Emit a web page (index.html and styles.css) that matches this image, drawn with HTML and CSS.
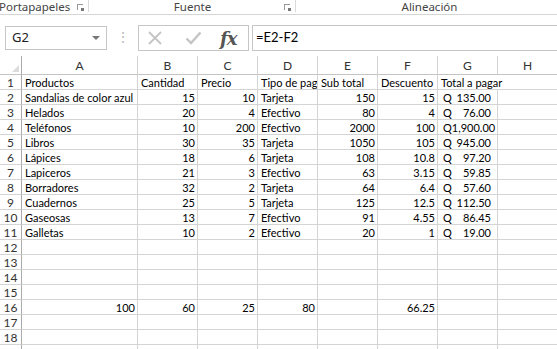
FILE: index.html
```html
<!DOCTYPE html>
<html lang="es">
<head>
  <meta charset="UTF-8" />
  <title>Libro1 - Excel</title>
  <link rel="stylesheet" href="styles.css">
</head>
<body>
  <div class="ribbon">
    <div class="group group-clip">Portapapeles <span class="launcher"></span></div>
    <div class="group group-font">Fuente <span class="launcher"></span></div>
    <div class="group group-align">Alineación</div>
  </div>

  <div class="formula-row">
    <div class="name-box">
      G2
      <span class="arrow"></span>
    </div>
    <div class="dots">⋮</div>
    <div class="fx-box">
      <svg width="14" height="14" viewBox="0 0 14 14"><path d="M1 1 L13 13 M13 1 L1 13" stroke="#c4c4c4" stroke-width="1.8" fill="none"/></svg>
      <svg width="17" height="14" viewBox="0 0 17 14"><path d="M1.5 7.5 L6 12 L15.5 1.5" stroke="#c4c4c4" stroke-width="2.4" fill="none"/></svg>
      <span class="fx">fx</span>
    </div>
    <div class="formula">=E2-F2</div>
  </div>

  <div class="sheet">
    <div class="hd corner"><span class="tri"></span></div>
    <div class="hd">A</div>
    <div class="hd">B</div>
    <div class="hd">C</div>
    <div class="hd">D</div>
    <div class="hd">E</div>
    <div class="hd">F</div>
    <div class="hd">G</div>
    <div class="hd">H</div>

    <div class="rh">1</div>
    <div class="c">Productos</div>
    <div class="c">Cantidad</div>
    <div class="c">Precio</div>
    <div class="c">Tipo de pago</div>
    <div class="c">Sub total</div>
    <div class="c">Descuento</div>
    <div class="c wide">Total a pagar</div>

    <div class="rh">2</div>
    <div class="c">Sandalias de color azul</div>
    <div class="c n">15</div><div class="c n">10</div><div class="c">Tarjeta</div>
    <div class="c n">150</div><div class="c n">15</div>
    <div class="c acc"><span>Q</span><span>135.00</span></div><div class="c"></div>

    <div class="rh">3</div>
    <div class="c">Helados</div>
    <div class="c n">20</div><div class="c n">4</div><div class="c">Efectivo</div>
    <div class="c n">80</div><div class="c n">4</div>
    <div class="c acc"><span>Q</span><span>76.00</span></div><div class="c"></div>

    <div class="rh">4</div>
    <div class="c">Teléfonos</div>
    <div class="c n">10</div><div class="c n">200</div><div class="c">Efectivo</div>
    <div class="c n">2000</div><div class="c n">100</div>
    <div class="c acc"><span>Q</span><span>1,900.00</span></div><div class="c"></div>

    <div class="rh">5</div>
    <div class="c">Libros</div>
    <div class="c n">30</div><div class="c n">35</div><div class="c">Tarjeta</div>
    <div class="c n">1050</div><div class="c n">105</div>
    <div class="c acc"><span>Q</span><span>945.00</span></div><div class="c"></div>

    <div class="rh">6</div>
    <div class="c">Lápices</div>
    <div class="c n">18</div><div class="c n">6</div><div class="c">Tarjeta</div>
    <div class="c n">108</div><div class="c n">10.8</div>
    <div class="c acc"><span>Q</span><span>97.20</span></div><div class="c"></div>

    <div class="rh">7</div>
    <div class="c">Lapiceros</div>
    <div class="c n">21</div><div class="c n">3</div><div class="c">Efectivo</div>
    <div class="c n">63</div><div class="c n">3.15</div>
    <div class="c acc"><span>Q</span><span>59.85</span></div><div class="c"></div>

    <div class="rh">8</div>
    <div class="c">Borradores</div>
    <div class="c n">32</div><div class="c n">2</div><div class="c">Tarjeta</div>
    <div class="c n">64</div><div class="c n">6.4</div>
    <div class="c acc"><span>Q</span><span>57.60</span></div><div class="c"></div>

    <div class="rh">9</div>
    <div class="c">Cuadernos</div>
    <div class="c n">25</div><div class="c n">5</div><div class="c">Tarjeta</div>
    <div class="c n">125</div><div class="c n">12.5</div>
    <div class="c acc"><span>Q</span><span>112.50</span></div><div class="c"></div>

    <div class="rh">10</div>
    <div class="c">Gaseosas</div>
    <div class="c n">13</div><div class="c n">7</div><div class="c">Efectivo</div>
    <div class="c n">91</div><div class="c n">4.55</div>
    <div class="c acc"><span>Q</span><span>86.45</span></div><div class="c"></div>

    <div class="rh">11</div>
    <div class="c">Galletas</div>
    <div class="c n">10</div><div class="c n">2</div><div class="c">Efectivo</div>
    <div class="c n">20</div><div class="c n">1</div>
    <div class="c acc"><span>Q</span><span>19.00</span></div><div class="c"></div>

    <div class="rh">12</div>
    <div class="c"></div><div class="c"></div><div class="c"></div><div class="c"></div>
    <div class="c"></div><div class="c"></div><div class="c"></div><div class="c"></div>

    <div class="rh">13</div>
    <div class="c"></div><div class="c"></div><div class="c"></div><div class="c"></div>
    <div class="c"></div><div class="c"></div><div class="c"></div><div class="c"></div>

    <div class="rh">14</div>
    <div class="c"></div><div class="c"></div><div class="c"></div><div class="c"></div>
    <div class="c"></div><div class="c"></div><div class="c"></div><div class="c"></div>

    <div class="rh">15</div>
    <div class="c"></div><div class="c"></div><div class="c"></div><div class="c"></div>
    <div class="c"></div><div class="c"></div><div class="c"></div><div class="c"></div>

    <div class="rh">16</div>
    <div class="c n">100</div><div class="c n">60</div><div class="c n">25</div><div class="c n">80</div>
    <div class="c"></div><div class="c n">66.25</div><div class="c"></div><div class="c"></div>

    <div class="rh">17</div>
    <div class="c"></div><div class="c"></div><div class="c"></div><div class="c"></div>
    <div class="c"></div><div class="c"></div><div class="c"></div><div class="c"></div>

    <div class="rh">18</div>
    <div class="c"></div><div class="c"></div><div class="c"></div><div class="c"></div>
    <div class="c"></div><div class="c"></div><div class="c"></div><div class="c"></div>

    <div class="rh"></div>
    <div class="c"></div><div class="c"></div><div class="c"></div><div class="c"></div>
    <div class="c"></div><div class="c"></div><div class="c"></div><div class="c"></div>
  </div>
</body>
</html>
```

FILE: styles.css
```css
body {
  margin: 0;
  width: 557px;
  height: 349px;
  overflow: hidden;
  background-color: #fff;
  font-family: "Lato", "Liberation Sans", sans-serif;
  color: #000;
}

/* ribbon group labels */
.ribbon {
  display: flex;
  height: 14px;
  border-bottom: 1px solid #d5d5d5;
  font-family: "Noto Sans", sans-serif;
  font-size: 11.5px;
  line-height: 13px;
  color: #444;
  white-space: nowrap;
}

.group {
  position: relative;
  box-sizing: border-box;
  height: 14px;
}

.group::after {
  content: "";
  position: absolute;
  right: 0;
  top: 0;
  height: 12px;
  border-right: 1px solid #dadada;
}

.group-clip {
  width: 90px;
  margin-left: -1px;
}

.group-font {
  width: 207px;
  text-align: center;
}

.group-align {
  flex: 1;
  text-align: center;
  padding-left: 6px;
}

.group-align::after {
  display: none;
}

.launcher {
  position: absolute;
  top: 4px;
  right: 6px;
  width: 6px;
  height: 6px;
  border-left: 1px solid #999;
  border-top: 1px solid #999;
  box-sizing: border-box;
}

.launcher::after {
  content: "";
  position: absolute;
  right: -1px;
  bottom: -1px;
  width: 3px;
  height: 3px;
  background: #777;
}

/* name box + formula bar */
.formula-row {
  display: flex;
  align-items: flex-start;
  margin-top: 10px;
  height: 26px;
}

.name-box {
  position: relative;
  box-sizing: border-box;
  margin-top: 1px;
  margin-left: 5px;
  width: 102px;
  height: 24px;
  border: 1px solid #c6c6c6;
  padding-left: 6px;
  font-family: "Noto Sans", sans-serif;
  font-size: 13px;
  line-height: 21px;
  color: #222;
}

.arrow {
  position: absolute;
  right: 6px;
  top: 9px;
  border-left: 4px solid transparent;
  border-right: 4px solid transparent;
  border-top: 4px solid #777;
}

.dots {
  width: 31px;
  text-align: center;
  color: #b9b9b9;
  font-size: 14px;
  line-height: 24px;
}

.fx-box {
  box-sizing: border-box;
  width: 111px;
  height: 26px;
  border: 1px solid #c6c6c6;
  display: flex;
  align-items: center;
  padding-left: 9px;
}

.fx-box svg:first-child {
  margin-right: 23px;
}

.fx-box svg:nth-child(2) {
  margin-right: 18px;
}

.fx {
  font-family: "DejaVu Serif", "Liberation Serif", serif;
  font-style: italic;
  font-weight: bold;
  font-size: 18px;
  color: #555;
  letter-spacing: -1px;
}

.formula {
  box-sizing: border-box;
  flex: 1;
  margin-left: 3px;
  height: 26px;
  border: 1px solid #c6c6c6;
  border-right: none;
  padding-left: 3px;
  font-size: 13px;
  line-height: 23px;
}

/* worksheet grid */
.sheet {
  display: grid;
  grid-template-columns: 22px 116px repeat(7, 60px);
  grid-template-rows: 19px;
  grid-auto-rows: 15px;
  margin-top: 5px;
  font-size: 11px;
  line-height: 15px;
}

.hd {
  box-sizing: border-box;
  border-right: 1px solid #d4d4d4;
  border-bottom: 1px solid #c4c4c4;
  text-align: center;
  color: #333;
  font-size: 12px;
  line-height: 19px;
}

.corner {
  position: relative;
  border-right: 1px solid #ababab;
}

.tri {
  position: absolute;
  right: 2px;
  bottom: 2px;
  border-left: 7px solid transparent;
  border-bottom: 7px solid #dcdcdc;
}

.rh {
  box-sizing: border-box;
  border-right: 1px solid #ababab;
  border-bottom: 1px solid #d4d4d4;
  text-align: center;
  color: #333;
  font-size: 12px;
}

.c {
  box-sizing: border-box;
  border-right: 1px solid #d4d4d4;
  border-bottom: 1px solid #d4d4d4;
  padding: 0 2px 0 3px;
  white-space: nowrap;
  overflow: hidden;
}

.n {
  text-align: right;
}

.wide {
  grid-column: span 2;
  border-right: none;
}

.acc {
  display: flex;
  justify-content: space-between;
  padding: 0 6px 0 5px;
}
```
